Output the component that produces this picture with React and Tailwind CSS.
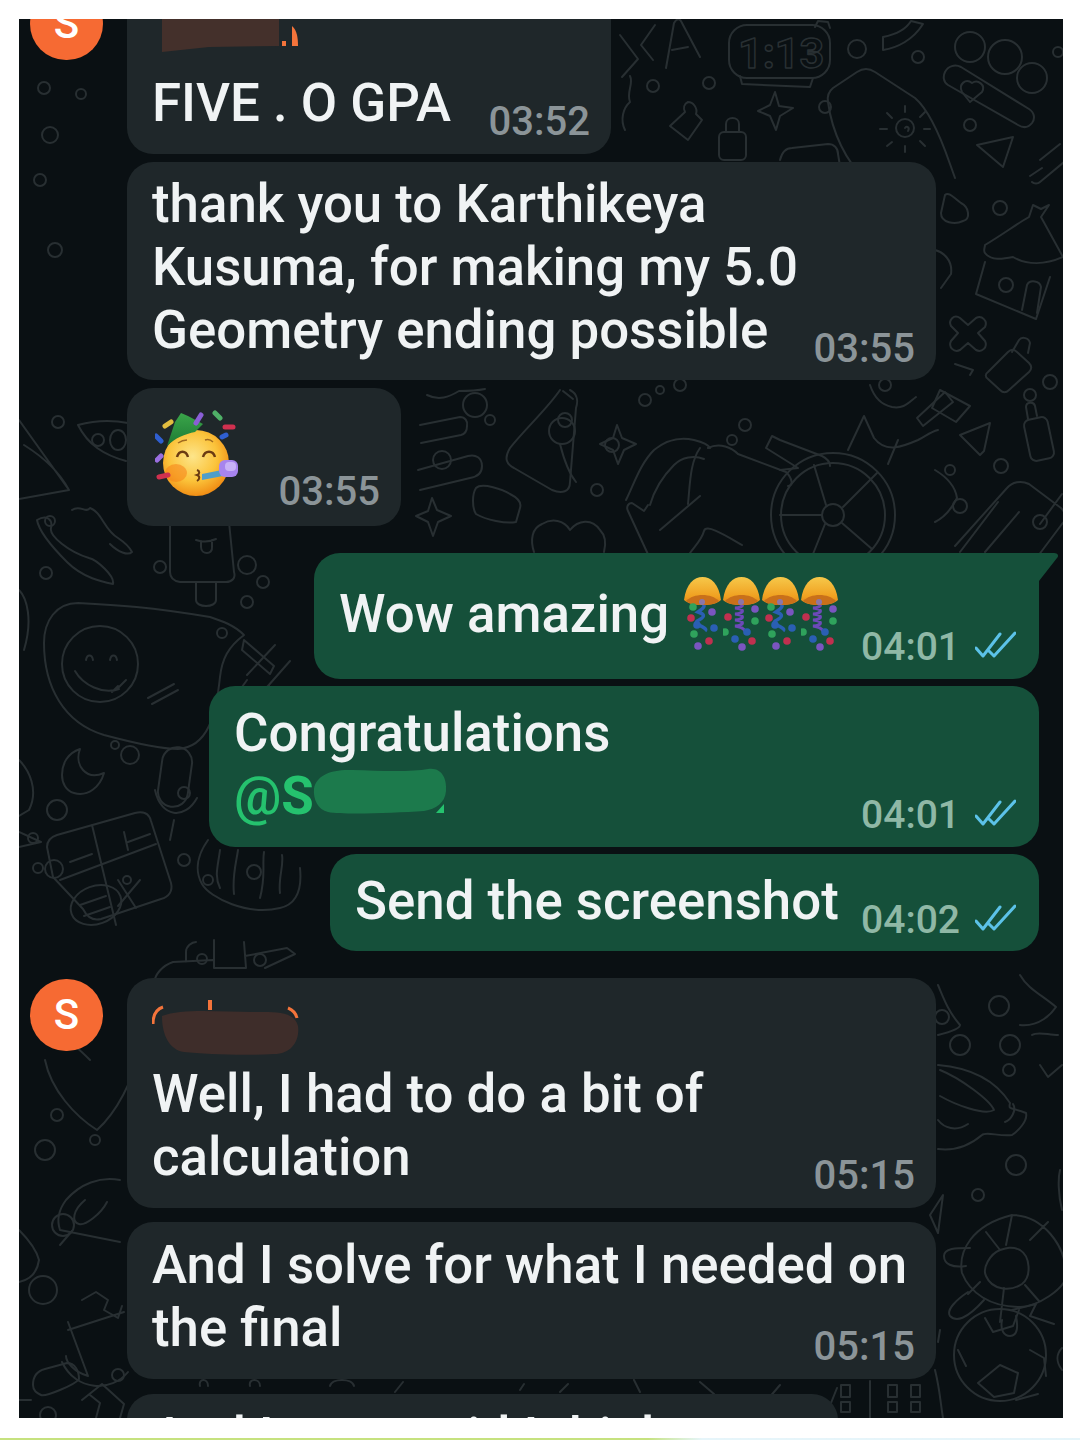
import React from 'react';

// wallpaper doodles, in page coordinates
const Doodles = () => (
  <svg className="absolute inset-0 h-full w-full" viewBox="19 19 1044 1399" fill="none" stroke="#282f32" strokeWidth="2" strokeLinecap="round" strokeLinejoin="round">
    {[[857,49,9],[918,57,6],[653,86,6],[709,83,6],[825,107,6],[970,125,6],[1058,52,5],[970,47,15],[1005,57,17],[1032,78,15],[1000,208,7],[1050,382,7],[1001,466,7],[960,506,7],[44,88,6],[81,94,5],[50,135,8],[40,180,6],[55,250,7],[58,422,6],[98,440,6],[50,521,5],[46,573,6],[160,567,6],[146,470,10],[263,582,6],[247,565,9],[247,602,6],[222,633,5],[224,697,6],[130,755,9],[57,810,10],[115,745,4],[33,838,5],[184,793,6],[184,860,6],[38,868,5],[54,869,9],[127,880,4],[208,880,5],[202,959,5],[260,960,6],[612,445,7],[597,490,6],[490,420,5],[565,420,7],[475,405,12],[645,400,6],[745,425,6],[660,390,4],[732,440,5],[942,1017,7],[999,1006,10],[960,1045,10],[1010,1045,10],[1009,1070,6],[1016,1165,10],[978,1195,6],[45,1150,10],[43,1290,14],[63,1225,11],[118,1375,6],[57,1115,6],[95,1140,5],[48,1415,8],[680,385,6],[885,385,6],[1030,395,6],[1040,522,7],[950,470,5]].map(([cx,cy,r],i)=>(
      <circle key={i} cx={cx} cy={cy} r={r} />
    ))}
    {/* top right */}
    <path d="M620 35l18 24-16 18M655 25l-14 20 12 15" />
    <path d="M666 68l8-45 c3-5 6-5 8 0l18 34M672 50l16-3" />
    <rect x="729" y="25" width="101" height="53" rx="18" />
    <path d="M740 76l2 8 68 3 3-9M815 27l3-6 10 1 2 6" />
    <text x="738" y="68" fontFamily="Roboto, sans-serif" fontWeight="700" fontSize="43" strokeWidth="1.5">1:13</text>
    <path d="M883 50c14-2 30-10 40-26l-12-3c-6 10-18 14-28 16z" />
    <path d="M857 72c6-4 12-4 18 0l40 26c14 12 26 40 35 66l5 14M857 72l-24 16c-5 4-6 8-5 14 4 30 18 60 38 78" />
    <circle cx="905" cy="128" r="9" />
    <path d="M905 128c2-3 5 0 3 3M905 106v6M887 113l5 5M880 129h7M887 146l5-4M905 152v-6M925 146l-5-5M930 129h-6M925 112l-5 5" />
    <path d="M977 145l36-8-10 30z" />
    <path d="M945 72c3-6 10-8 16-5l68 42c6 4 6 10 3 14-4 5-9 5-14 2l-70-40c-5-3-5-9-3-13z" />
    <path d="M962 92c-4-8 4-14 10-9 6-4 14 2 10 9l-12 10z" />
    <rect x="719" y="132" width="27" height="28" rx="5" />
    <path d="M726 132v-8c0-8 13-8 13 0v8" />
    <path d="M775 92l4 14 14 2-13 8-4 14-6-14-12-5 12-6z" />
    <path d="M688 102c-4 2-5 6-3 10l-15 14 18 14 14-20-6-6c2-6-3-12-8-12z" />
    <path d="M780 160c2-8 6-12 12-12l36-4c6 0 10 4 10 10l2 12" />
    <path d="M625 130c-5-10-2-22 5-28-4-10 4-18 0-26" />
    {/* house and right column */}
    <path d="M985 262l-9 32 60 25 14-42" />
    <path d="M985 245c20-12 30-20 44-28l4-12 8 4 8-4-8 12 22 40c-18 8-36 8-50 0-10 2-22 4-28-4-2-2 0-6 0-8z" />
    <circle cx="1006" cy="285" r="7" />
    <path d="M1022 310l5-25c3-6 13-4 14 2l-4 26" />
    <path d="M960 318l8 7 8-7c6-3 12 3 9 9l-7 6 7 8c3 6-3 12-9 9l-8-7-8 7c-6 3-12-3-9-9l7-8-7-7c-3-6 3-12 9-8z" />
    <path d="M988 372l20-20c3-3 6-3 9 0l12 11c3 3 3 6 0 9l-20 18c-3 3-6 3-9 0l-12-11c-3-2-3-5 0-7z" />
    <path d="M1012 352l7-12c3-4 10-2 11 3l-2 10" />
    <rect x="1027" y="418" width="24" height="42" rx="6" transform="rotate(-12 1039 439)" />
    <path d="M1028 419l-2-12c0-5 8-6 9-1l2 10" />
    <path d="M960 435l30-12-6 28-4 4z" />
    <path d="M955 546l52-58c5-6 14-8 22-4l32 24c6 6 5 12 1 16l-30 40M960 552l38-50M985 552l34-40M1040 524l22-30" />
    <path d="M935 250c8 2 18 10 16 24l-10 14" />
    <path d="M945 195c4-4 10 4 16 8 8 4 10 16 2 18-8 4-22 2-22-8z" />
    <path d="M955 364l18 6-3 5M940 390l30 16-14 16-24-14z" />
    <path d="M935 470c10 6 20 14 22 28-6 12-14 20-22 24" />
    <path d="M1040 160l20-16M1030 176l12-8M1032 182c2 2 6 2 8 0l24-20" />
    {/* middle, between the bubbles */}
    <path d="M427 395c12 6 22 2 32-4 8 0 16 0 26-2" />
    <path d="M560 390c-12 18-36 40-50 58-6 10-4 16 4 20l38 22c10 4 18 2 18-8l6-74c2-6 2-14-6-18" />
    <circle cx="562" cy="431" r="13" />
    <path d="M560 444c4 16 8 28 16 38M563 391l10 8" />
    <path d="M420 425l40-8c5 0 8 4 7 9 0 5-2 8-6 9l-40 8M418 470l50-14c8-2 14 2 14 10s-6 11-12 12l-50 12" />
    <circle cx="442" cy="460" r="9" />
    <path d="M617 425l5 13 14 6-12 6-6 14-5-14-13-6 13-6z" />
    <path d="M432 498l5 12 14 6-13 6-5 14-5-14-12-6 12-5z" />
    <path d="M476 488c6-6 28 2 34 6 8 4 12 8 10 14l-4 14c-10 2-30-2-40-8-4-6-4-20 0-26z" />
    <path d="M534 552c-4-12-2-24 8-28 10-6 22-4 28 6 8-10 22-12 30 0 6 6 6 14 4 22" />
    <path d="M626 500c8-16 14-36 28-50 10-8 22-14 40-10 8 2 14 4 16 8M650 505c4-14 12-28 24-40 8-8 20-10 30-6" />
    <path d="M648 505l-4 6-12-8c-4 0-6 4-4 8l24 52M660 530l40-34M690 553c6-8 12-14 14-22 2-8 24 6 38 14" />
    <path d="M700 448c-10 14-10 36-12 56M708 448c12-6 24 0 30 6l48 18c6 6 8 14 2 14" />
    <circle cx="833" cy="515" r="62" />
    <circle cx="833" cy="515" r="52" />
    <circle cx="833" cy="515" r="11" />
    <path d="M826 505l-12-40M843 507l34-34M822 515h-42M842 523l30 26M825 524l-12 30" />
    <path d="M780 470l18-2-32-20 6-12 8 4 42 16c8 4 8 8 8 10" />
    <path d="M848 450l16-34 10 22c12 16 30 8 44 2 8-4 12-8 20-10M898 440l-10 24M870 385c4 12 12 20 22 22 12 2 16-4 24-10" />
    <path d="M945 392l-28 26 6 8 30-24z" />
    {/* left column */}
    <path d="M19 420l50 70-50 9M24 445c16 10 34 24 45 45" />
    <path d="M78 425c10 20 26 30 48 36M78 425c22-6 40-4 50-2" />
    <ellipse cx="118" cy="440" rx="8" ry="10" />
    <path d="M37 520c10-6 16 0 14 8-2 8 18 24 38 30 8 2 26 18 24 26-10-2-30-6-46-22-12-12-28-30-30-42zM72 510c8-6 14 4 18-2 12 4 14 22 28 30 6 4 12 10 14 14-4 4-14 0-22-8" />
    <path d="M170 510v62c0 6 4 9 10 10h46c6 0 10-4 8-10l-6-60M196 582v18c0 8 20 8 20 0v-18" />
    <path d="M196 540c6 2 14 2 20-1M201 541v6c0 8 12 8 11 0v-7" />
    <path d="M210 617c-60-10-92-12-132-14-22 0-34 18-34 40 0 44 20 80 60 92 30 8 60 14 74 14 30-2 38-34 42-72 2-18 8-30 24-42-10-10-22-14-34-18z" />
    <circle cx="100" cy="664" r="38" />
    <path d="M75 671c8 14 28 24 44 18M86 660c1-6 6-6 7 0M110 660c1-6 6-6 7 0M118 688l8-8M112 692l6-6" />
    <path d="M148 698l26-14M152 704l26-14" />
    <path d="M260 695l30-34M247 675l28-30M244 640l30 26-4 8-28-24zM247 680c-6 8-12 18-14 24 6 0 18-2 26-8l10-10M240 705l14-10" />
    <path d="M62 775c0-12 6-22 18-26-6 16 6 32 24 24-4 14-16 24-30 20-8-2-12-10-12-18z" />
    <rect x="160" y="747" width="30" height="60" rx="15" transform="rotate(8 175 777)" />
    <path d="M155 790c6 28 30 30 42 8M174 820l-4 20" />
    <path d="M19 760c10 10 20 30 10 50l-10 6M19 590c8 8 14 30 5 60" />
    <path d="M53 877l-6-30c0-6 4-10 10-12l78-22c8-2 14 0 16 8l20 62c2 8-2 14-10 16l-60 20c-8 2-14-2-18-10zM92 825l24 100M60 880l96-36M70 862l22-8M128 842l22-8M124 832l4 18M118 880l18 28M140 880l-22 26" />
    <ellipse cx="96" cy="905" rx="26" ry="19" transform="rotate(-20 96 905)" />
    <path d="M80 905l26-9M84 916l26-9" />
    <path d="M19 832l22 10-22 5" />
    <path d="M208 840c-10 14-14 30-6 44 8 14 46 32 78 24 18-4 22-20 20-40M220 850c-2 16-6 26 0 38M238 850c-2 14-6 26-4 44M264 852c-2 12 2 24-4 46M282 855c2 10-4 24-2 38" />
    <circle cx="254" cy="872" r="7" />
    <path d="M214 940v28h32l-2-26M213 960l-40 2c-12 4-18 14-18 18M245 956l42-8 8 6-30 14M186 962v-10c0-6 6-10 10-10" />
    <path d="M45 1060c6 30 30 56 52 70 20-18 36-50 42-78" />
    <path d="M60 1040c10 0 20 10 30 20M120 1180c-20-4-40 4-54 20-6 8-10 18-6 30l60 12M85 1200c-12 10-14 22-6 24 6 2 22-10 28-22M60 1245l12-14" />
    <path d="M19 1230c10 10 18 22 20 30-2 14-10 20-20 22" />
    <path d="M82 1300l14-8 12 8-4 10 14 8 4-12M68 1330l56-18M68 1322l20 54c-14-4-22-14-22-20M62 1362c14 30 50 30 66 10" />
    <path d="M33 1385c0-8 4-14 12-16l22-6c8 0 12 8 12 16-4 6-34 18-38 16-4-2-8-4-8-10zM90 1395l10 8-4 15" />
    <path d="M82 1400l20-16 22 20-4 14M19 1400h12" />
    {/* right lower column */}
    <path d="M938 985c6 14 10 26 22 40 0 4-14 8-22 10M1020 975c8 14 22 20 36 32-4 6-16 20-36 18" />
    <path d="M1058 1035c-10 0-20-4-26 0M1040 1065l8 12 14-12" />
    <path d="M938 1065c24 2 54 10 72 38-2 8 2 4 16 10 2 8-8 18-14 22-12 2-26-4-30 0-14 12-28 16-44 14M938 1120c6 8 18 12 30 4M940 1070c20 8 50 30 54 40-10 6-40-6-54-14M1005 1122c6-2 12-12 8-18" />
    <path d="M943 1195l-5 38-8-18zM1060 1170c-2 8-2 24 2 40" />
    <path d="M1012 1215c30 0 54 30 54 60 0 14-30 32-46 32-30 0-50-14-58-34-4-22 10-48 50-58zM1000 1250c-10 4-18 18-14 26 6 14 24 16 36 8 10-8 8-28-2-34-8-4-14-2-20 0zM986 1232l14 18M1012 1215l-6 30M1030 1240l18-18M1025 1285l14 16M1004 1288l-4 34M980 1282l-12 12" />
    <path d="M968 1292c-12 8-22 18-18 24 6 6 16 4 34-16M970 1248c-14 0-26 0-26 8s8 12 22 10M1002 1320c-2 10 2 16 8 16 8 0 8-10 6-20" />
    <circle cx="1000" cy="1355" r="46" />
    <path d="M985 1318l8 14 20-6 6-16M1000 1365l18 8-4 20-20 4-16-14zM1030 1350l14 8 2 18M958 1350l8 16M1016 1400l22-6" />
    <path d="M1012 1310l24-6-6 12 24 8M1062 1348c-6 6-6 14 0 22" />
    <path d="M940 1330l-2 12M935 1370c5 20 5 30 8 48" />
    {/* bottom band */}
    <rect x="841" y="1385" width="9" height="12" /><rect x="841" y="1402" width="9" height="10" />
    <rect x="888" y="1385" width="9" height="12" /><rect x="888" y="1402" width="9" height="10" />
    <rect x="911" y="1385" width="9" height="12" /><rect x="911" y="1402" width="9" height="10" />
    <path d="M870 1381v37M825 1418l12-30" />
    <path d="M200 1386c-2-8 8-8 8 0M250 1386c-2-8 10-8 10 0M330 1386c2-8 22-8 24 0M395 1392l8-10M520 1390l4-6M560 1392l8-8M640 1392l-6-12M700 1382l14 12M780 1385l-12 14" />
  </svg>
);

const Time = ({ children }) => (
  <span className="shrink-0 text-[40px] leading-[40px] text-[#8b9498] -mb-[7px]">
    {children}
  </span>
);

const Ticks = () => (
  <svg width="41" height="28" viewBox="0 0 41 28" fill="none" stroke="#5cc2e8" strokeWidth="3" strokeLinecap="round" strokeLinejoin="round" className="block">
    <path d="M1 17l7 8L25 3" />
    <path d="M14 20l5 5L40 2" />
  </svg>
);

const SentTime = ({ children }) => (
  <div className="flex items-end gap-[15px] shrink-0 -mb-[7px]">
    <span className="text-[39px] leading-[40px] text-[#8fb8a6]">{children}</span>
    <div className="mb-[8px]"><Ticks /></div>
  </div>
);

const Avatar = () => (
  <div className="w-[73px] h-[72px] rounded-full bg-[#f66a33] flex items-center justify-center shrink-0 ml-[11px] mr-[24px] mt-[1px] text-white text-[42px] leading-none">
    S
  </div>
);

// scribbled out sender name
const NameSmudge = () => (
  <svg width="150" height="60" viewBox="0 0 150 60" className="block">
    <path d="M1 24c0-10 4-15 10-17" stroke="#f4743b" strokeWidth="3" fill="none" />
    <rect x="56" y="0" width="4" height="10" fill="#f4743b" />
    <path d="M136 8c5 2 8 6 9 10" stroke="#f4743b" strokeWidth="3" fill="none" />
    <path d="M10 16c20-8 60-4 90-4 20 0 42-2 46 14 2 14-6 28-24 28-30 2-70 0-90-2C18 50 10 36 10 16z" fill="#3e2d2a" />
  </svg>
);

const TopSmudge = () => (
  <svg width="150" height="33" viewBox="0 0 150 33" className="block">
    <path d="M10 0h117v27l-70 1-47 5z" fill="#44302b" />
    <path d="M140 7c5 4 6 12 6 20h-6z" fill="#f4743b" />
    <rect x="130" y="22" width="4" height="5" fill="#f4743b" />
  </svg>
);

const MentionSmudge = () => (
  <svg width="140" height="50" viewBox="0 0 140 50" className="block -ml-[2px]">
    <path d="M2 22C4 8 20 2 40 3c30 1 60 2 76-1 14-2 19 10 18 22-1 12-10 18-22 20-30 2-80 4-96 1C6 43 1 32 2 22z" fill="#1c7a4c" />
    <path d="M124 46l8-9v9z" fill="#25c26e" />
  </svg>
);

const PartyFace = () => (
  <svg width="85" height="87" viewBox="0 0 85 87" className="block" fill="none">
    <defs>
      <radialGradient id="face" cx="45%" cy="40%" r="62%">
        <stop offset="0" stopColor="#fde58a" />
        <stop offset="0.6" stopColor="#fbc33a" />
        <stop offset="1" stopColor="#f08a12" />
      </radialGradient>
      <linearGradient id="hat" x1="0" y1="0" x2="0" y2="1">
        <stop offset="0" stopColor="#3aa54a" />
        <stop offset="1" stopColor="#1d7a33" />
      </linearGradient>
    </defs>
    <circle cx="41" cy="53" r="33" fill="url(#face)" />
    <ellipse cx="21" cy="63" rx="11" ry="9" fill="#f57f17" opacity="0.55" />
    <path d="M12 36L20 12l6-9 7 3 15 8-8 8c-10 2-20 6-28 14z" fill="url(#hat)" />
    <g strokeLinecap="round" strokeWidth="5">
      <path d="M10 16l6-4" stroke="#e2bd3f" />
      <path d="M41 13l5-8" stroke="#8a5fd6" />
      <path d="M60 3l5 5" stroke="#4fb067" />
      <path d="M70 17h8" stroke="#d0304f" />
      <path d="M67 27l4-2" stroke="#2f5fd0" />
      <path d="M1 26l5 5" stroke="#2f5fd0" />
      <path d="M2 50l4-4" stroke="#9a6fe0" />
      <path d="M4 67l9-2" stroke="#d0304f" />
    </g>
    <path d="M22 47c2-7 9-7 11 0M48 47c2-7 10-7 12 0" stroke="#6b3b12" strokeWidth="2.5" />
    <path d="M23 33c3-2 6-3 9-3M50 30c3-1 6 0 8 2" stroke="#a06a1f" strokeWidth="1.5" />
    <path d="M42 60c3 1 3 4 0 5 3 1 3 4 0 6" stroke="#6b3b12" strokeWidth="2" />
    <path d="M47 64l20-4 1 6-21 4z" fill="#4f9ec9" />
    <rect x="64" y="50" width="19" height="17" rx="6" fill="#a784ee" />
    <rect x="70" y="52" width="11" height="9" rx="4" fill="#c8b2f7" />
  </svg>
);

const Popper = ({ spring }) => (
  <svg width="37" height="74" viewBox="0 0 37 74" className="block">
    <defs>
      <linearGradient id="dome" x1="0" y1="0" x2="0" y2="1">
        <stop offset="0" stopColor="#f6c84a" />
        <stop offset="0.7" stopColor="#f0a020" />
        <stop offset="1" stopColor="#d8801a" />
      </linearGradient>
    </defs>
    {spring ? (
      <path d="M12 26c10 0 10 4 0 5 10 1 10 5 0 6 10 1 10 5 0 6 10 1 10 5 0 6 7 1 9 3 10 5" stroke="#6c49b8" strokeWidth="3" fill="none" />
    ) : (
      <path d="M18 26c5 3 0 6-4 9 6 2 8 4 1 8-4 2-4 3 2 6 3 2 6 3 4 5" stroke="#2a5fb4" strokeWidth="3.500" fill="none" />
    )}
    <path d="M0 23C2 7 10 0 18.500 0S35 7 37 23c-3 3-9 5-18.500 5S3 26 0 23z" fill="url(#dome)" />
    <path d="M2 24c4-4 10-6 16.500-6S31 20 35 24c-4 3-9 4-16.500 4S6 27 2 24z" fill="#c9701a" />
    <circle cx="18" cy="25" r="3" fill="#8d76a8" />
    {(spring
      ? [[2,55,'#2fa35c'],[5,40,'#c0304f'],[32,32,'#7a55c0'],[32,44,'#2fa35c'],[24,55,'#2a5fb4'],[12,62,'#2a5fb4'],[29,64,'#c0304f'],[19,70,'#7a55c0']]
      : [[9,30,'#2fa35c'],[7,41,'#c0304f'],[13,48,'#2a5fb4'],[10,57,'#2fa35c'],[14,69,'#7a55c0'],[25,64,'#c0304f'],[30,51,'#2a5fb4'],[28,35,'#7a55c0']]
    ).map(([cx, cy, fill], i) => (
      <circle key={i} cx={cx} cy={cy} r="3.800" fill={fill} />
    ))}
  </svg>
);

const App = () => {
  return (
    <div className="w-[1080px] h-[1440px] bg-white overflow-hidden pt-[19px] [font-family:Roboto,sans-serif]">
      <div className="relative mx-[19px] w-[1044px] h-[1399px] overflow-hidden bg-[#0a1013]">
        <Doodles />
        <div className="relative flex flex-col text-[52.8px] leading-[63px] font-medium text-[#f0f3f4] whitespace-nowrap">
          {/* first group, cut off by the top of the picture */}
          <div className="flex -mt-[32px]">
            <Avatar />
            <div className="w-[484px] rounded-[26px] bg-[#1f272a] pl-[25px] pr-[21px] pt-[32px] pb-[19px]">
              <div className="h-[53px]"><TopSmudge /></div>
              <div className="flex justify-between items-end">
                <span className="min-w-0">FIVE . O GPA</span>
                <Time>03:52</Time>
              </div>
            </div>
          </div>

          <div className="mt-[8px] ml-[108px] w-[809px] rounded-[26px] bg-[#1f272a] pl-[25px] pr-[21px] pt-[11px] pb-[18px] flex justify-between items-end">
            <span className="min-w-0">thank you to Karthikeya<br />Kusuma, for making my 5.0<br />Geometry ending possible</span>
            <Time>03:55</Time>
          </div>

          <div className="mt-[8px] ml-[108px] w-[274px] h-[138px] rounded-[26px] bg-[#1f272a] pl-[28px] pr-[21px] pt-[22px] pb-[14px] flex justify-between">
            <PartyFace />
            <span className="self-end text-[40px] leading-[40px] text-[#8b9498]">03:55</span>
          </div>

          {/* my replies */}
          <div className="relative mt-[27px] ml-[295px] w-[725px] h-[126px] rounded-[26px] rounded-tr-none bg-[#15503a] pl-[25px] pr-[23px] pb-[19px] flex">
            <svg width="20" height="28" viewBox="0 0 20 28" className="absolute left-full top-0">
              <path d="M0 0h15c4 0 5 3 3 5L0 28z" fill="#15503a" />
            </svg>
            <span className="mt-[30px]">Wow amazing</span>
            <div className="mt-[24px] ml-[15px] flex gap-[2px]">
              <Popper />
              <Popper spring />
              <Popper />
              <Popper spring />
            </div>
            <div className="ml-auto self-end"><SentTime>04:01</SentTime></div>
          </div>

          <div className="relative mt-[7px] ml-[190px] w-[830px] h-[161px] rounded-[26px] bg-[#15503a] pl-[25px] pr-[23px] pt-[16px] pb-[19px] flex justify-between items-end">
            <div>
              <div>Congratulations</div>
              <div className="flex items-center">
                <span className="text-[#25c26e]">@<span className="font-bold">S</span></span>
                <div className="-mt-[10px]"><MentionSmudge /></div>
              </div>
            </div>
            <SentTime>04:01</SentTime>
          </div>

          <div className="mt-[7px] ml-[311px] w-[709px] rounded-[26px] bg-[#15503a] pl-[25px] pr-[23px] pt-[16px] pb-[18px] flex justify-between items-end">
            <span className="min-w-0">Send the screenshot</span>
            <SentTime>04:02</SentTime>
          </div>

          {/* second incoming group */}
          <div className="flex mt-[27px]">
            <Avatar />
            <div className="w-[809px] rounded-[26px] bg-[#1f272a] pl-[25px] pr-[21px] pt-[22px] pb-[19px]">
              <div className="h-[63px]"><NameSmudge /></div>
              <div className="flex justify-between items-end">
                <span className="min-w-0">Well, I had to do a bit of<br />calculation</span>
                <Time>05:15</Time>
              </div>
            </div>
          </div>

          <div className="mt-[14px] ml-[108px] w-[809px] rounded-[26px] bg-[#1f272a] pl-[25px] pr-[21px] pt-[12px] pb-[19px] flex justify-between items-end">
            <span className="min-w-0">And I solve for what I needed on<br />the final</span>
            <Time>05:15</Time>
          </div>

          <div className="mt-[15px] ml-[108px] w-[711px] rounded-[26px] bg-[#1f272a] pl-[25px] pr-[21px] pt-[12px] pb-[19px]">
            <span>And I even said I think</span>
          </div>
        </div>
      </div>
      <div className="mt-[20px] h-[3px] bg-gradient-to-r from-[#c6e27f] from-60% to-[#e6f5fa] to-65%" />
    </div>
  );
};

export default App;
